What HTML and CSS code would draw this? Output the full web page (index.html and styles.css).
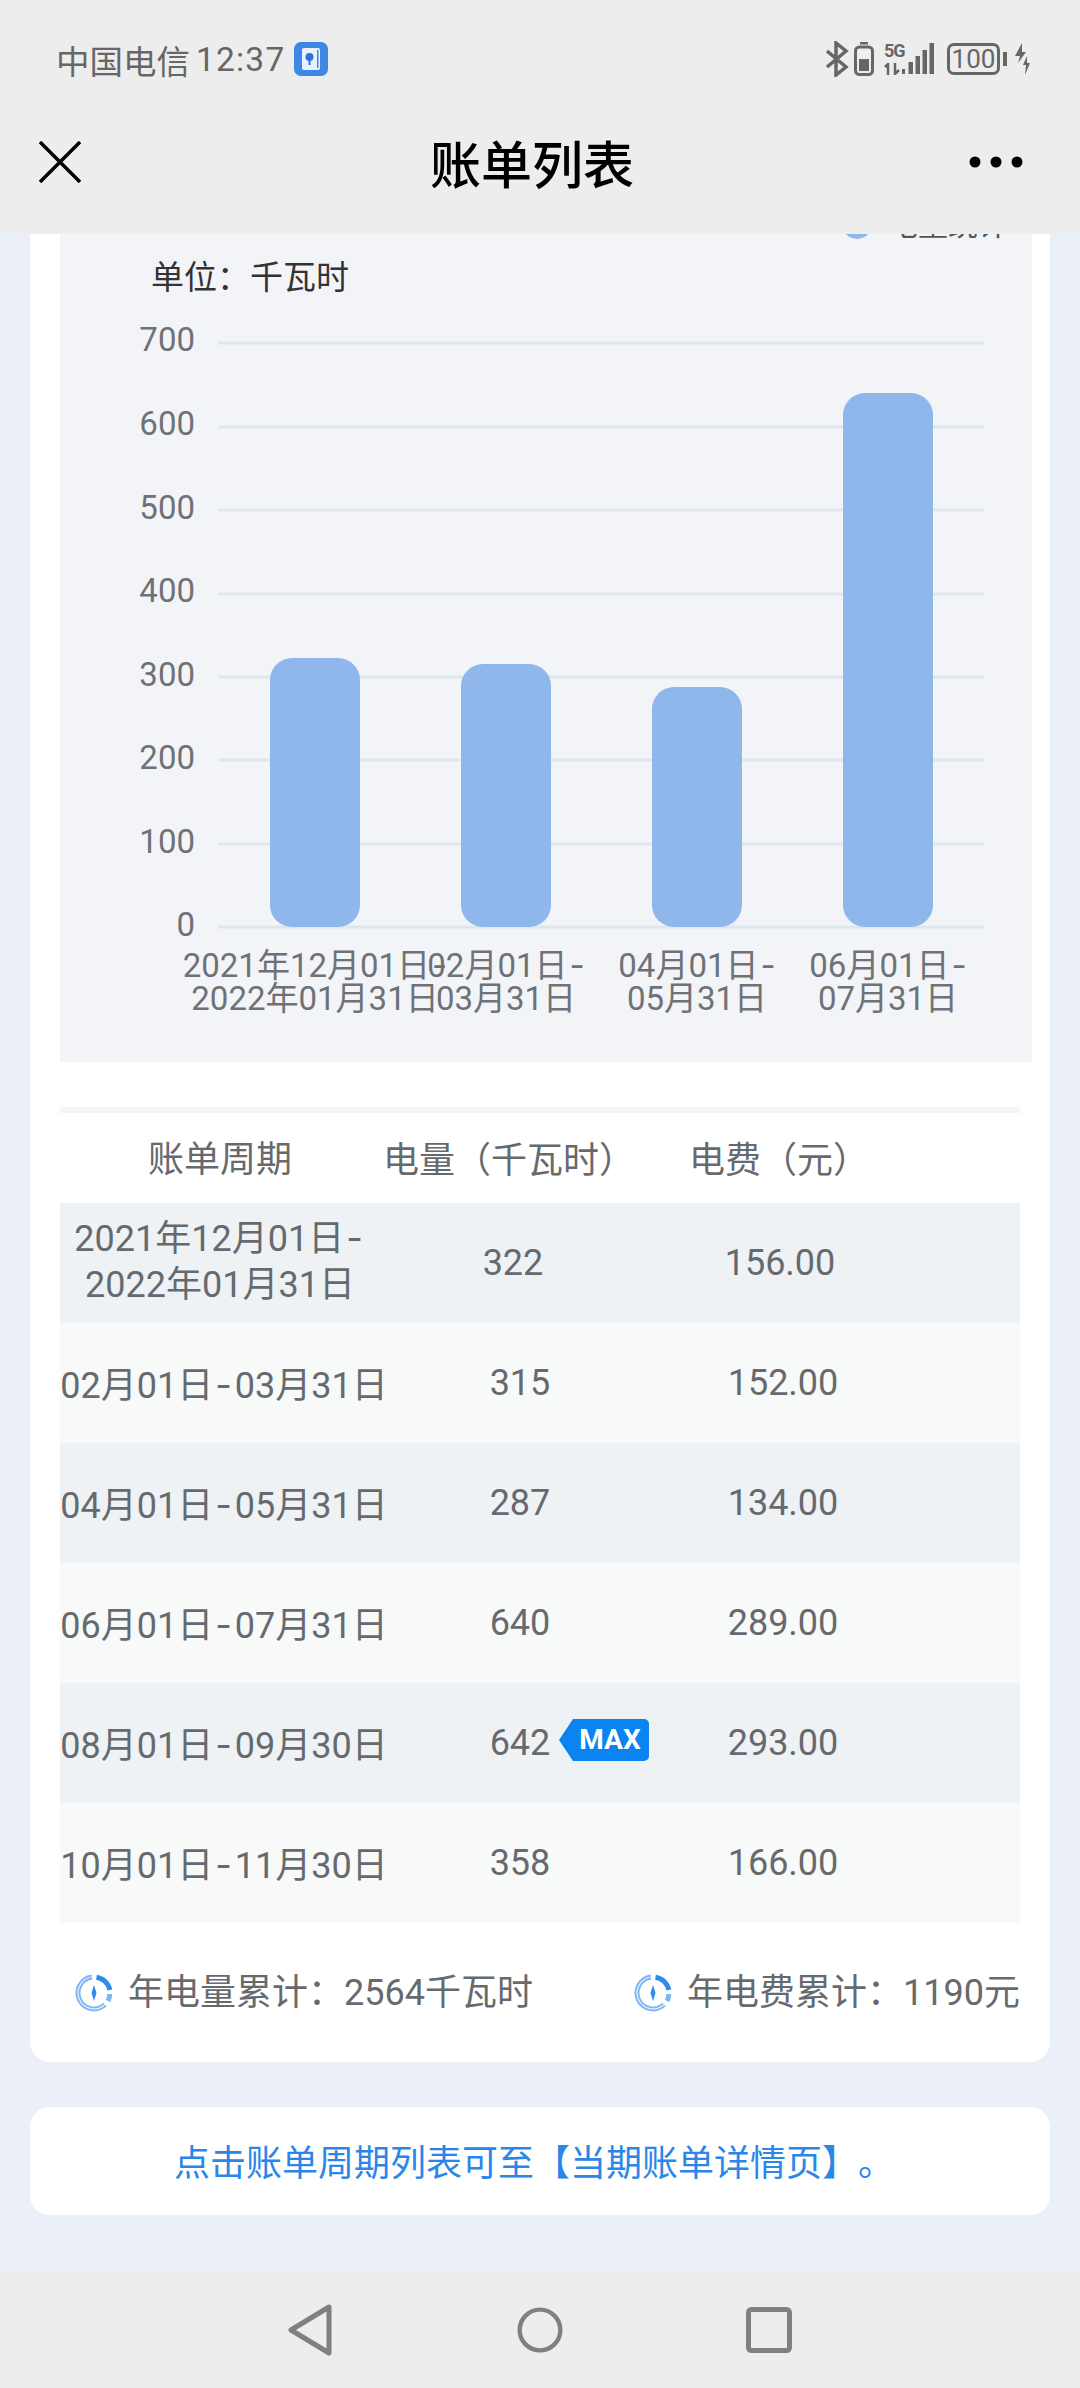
FILE: index.html
```html
<!DOCTYPE html>
<html lang="zh-CN">
<head>
    <meta charset="UTF-8">
    <meta name="viewport" content="width=device-width, initial-scale=1.0">
    <title>账单列表</title>
    <link rel="stylesheet" href="styles.css">
</head>
<body>
    <header class="topbar">
        <div class="status">
            <div class="status-left">
                <span class="carrier">中国电信</span>
                <span class="clock">12:37</span>
                <svg class="app-icon" viewBox="0 0 34 34">
                    <rect width="34" height="34" rx="7" fill="#3f87e4"/>
                    <rect x="8" y="6" width="18" height="22" rx="2" fill="#e8f1fc"/>
                    <rect x="23" y="8" width="1.5" height="18" fill="#3f87e4"/>
                    <circle cx="15.5" cy="15" r="4" fill="#2f74d0"/>
                    <rect x="14.5" y="18" width="2" height="5" fill="#2f74d0"/>
                </svg>
            </div>
            <div class="status-right">
                <svg class="ico-bt" viewBox="0 0 24 36">
                    <path d="M2 10 L21 26 L11 34 L11 2 L21 10 L2 26" fill="none" stroke="#666" stroke-width="3.5"/>
                </svg>
                <svg class="ico-phone" viewBox="0 0 20 34">
                    <rect x="6" y="0" width="8" height="2.5" fill="#666"/>
                    <rect x="1.5" y="5" width="17" height="27.5" rx="4" fill="none" stroke="#666" stroke-width="3"/>
                    <rect x="5" y="17" width="10" height="12" fill="#666"/>
                </svg>
                <div class="signal">
                    <div class="signal-type">
                        <span class="five-g">5G</span>
                        <svg class="ico-arrows" viewBox="0 0 18 12">
                            <path d="M4 12 V1 L1 4 M11 0 V11 L15 7" fill="none" stroke="#666" stroke-width="2.5"/>
                        </svg>
                    </div>
                    <svg class="ico-bars" viewBox="0 0 32 32">
                        <rect x="0" y="26" width="3" height="5" fill="#666"/>
                        <rect x="6.5" y="19" width="4.5" height="12" fill="#666"/>
                        <rect x="13.5" y="13" width="4.5" height="18" fill="#666"/>
                        <rect x="20.5" y="7" width="4.5" height="24" fill="#666"/>
                        <rect x="27.5" y="0" width="4.5" height="31" fill="#666"/>
                    </svg>
                </div>
                <div class="battery"><span>100</span></div>
                <span class="battery-cap"></span>
                <svg class="ico-bolt" viewBox="0 0 16 32">
                    <path d="M8 0 L1 13 H6 L4 20 L12 9 H8 Z M13 13 L9 22 H12 L11 32 L16 20 H13 Z" fill="#666"/>
                </svg>
            </div>
        </div>
        <div class="titlebar">
            <svg class="ico-close" viewBox="0 0 42 42">
                <path d="M1 1 L41 41 M41 1 L1 41" stroke="#000" stroke-width="3.5"/>
            </svg>
            <h1>账单列表</h1>
            <svg class="ico-more" viewBox="0 0 54 12">
                <circle cx="6" cy="6" r="5.5"/>
                <circle cx="27" cy="6" r="5.5"/>
                <circle cx="48" cy="6" r="5.5"/>
            </svg>
        </div>
    </header>

    <main class="content">
        <section class="card">
            <div class="chart-panel">
                <svg class="chart" viewBox="60 234 972 828">
                    <circle cx="857" cy="224" r="15" fill="#8fb7ec"/>
                    <text class="legend" x="888" y="235">电量统计</text>
                    <text class="unit" x="151" y="289">单位：千瓦时</text>

                    <g class="grid">
                        <line x1="218" x2="984" y1="343" y2="343"/>
                        <line x1="218" x2="984" y1="427" y2="427"/>
                        <line x1="218" x2="984" y1="510" y2="510"/>
                        <line x1="218" x2="984" y1="594" y2="594"/>
                        <line x1="218" x2="984" y1="677" y2="677"/>
                        <line x1="218" x2="984" y1="760" y2="760"/>
                        <line x1="218" x2="984" y1="844" y2="844"/>
                        <line x1="218" x2="984" y1="927" y2="927"/>
                    </g>

                    <g class="y-axis">
                        <text x="195" y="351">700</text>
                        <text x="195" y="435">600</text>
                        <text x="195" y="519">500</text>
                        <text x="195" y="602">400</text>
                        <text x="195" y="686">300</text>
                        <text x="195" y="769">200</text>
                        <text x="195" y="853">100</text>
                        <text x="195" y="936">0</text>
                    </g>

                    <g class="bars">
                        <rect x="270" y="658" width="90" height="269" rx="22"/>
                        <rect x="461" y="664" width="90" height="263" rx="22"/>
                        <rect x="652" y="687" width="90" height="240" rx="22"/>
                        <rect x="843" y="393" width="90" height="534" rx="22"/>
                    </g>

                    <g class="x-axis">
                        <text x="315" y="977">2021年12月01日<tspan class="dash" dx="2">-</tspan></text>
                        <text x="315" y="1010">2022年01月31日</text>
                        <text x="506" y="977">02月01日<tspan class="dash" dx="2">-</tspan></text>
                        <text x="506" y="1010">03月31日</text>
                        <text x="697" y="977">04月01日<tspan class="dash" dx="2">-</tspan></text>
                        <text x="697" y="1010">05月31日</text>
                        <text x="888" y="977">06月01日<tspan class="dash" dx="2">-</tspan></text>
                        <text x="888" y="1010">07月31日</text>
                    </g>
                </svg>
            </div>

            <div class="bill-table">
                <div class="row row-head">
                    <span>账单周期</span>
                    <span>电量（千瓦时）</span>
                    <span>电费（元）</span>
                </div>
                <div class="row row-first row-dark">
                    <span class="period-long">2021年12月01日<i class="dash">-</i><br>2022年01月31日</span>
                    <span>322</span>
                    <span>156.00</span>
                </div>
                <div class="row">
                    <span>02月01日<i class="dash">-</i>03月31日</span>
                    <span>315</span>
                    <span>152.00</span>
                </div>
                <div class="row row-dark">
                    <span>04月01日<i class="dash">-</i>05月31日</span>
                    <span>287</span>
                    <span>134.00</span>
                </div>
                <div class="row">
                    <span>06月01日<i class="dash">-</i>07月31日</span>
                    <span>640</span>
                    <span>289.00</span>
                </div>
                <div class="row row-dark">
                    <span>08月01日<i class="dash">-</i>09月30日</span>
                    <span class="has-badge">642<b class="max-badge">MAX</b></span>
                    <span>293.00</span>
                </div>
                <div class="row">
                    <span>10月01日<i class="dash">-</i>11月30日</span>
                    <span>358</span>
                    <span>166.00</span>
                </div>
            </div>

            <div class="totals">
                <div class="total">
                    <svg class="ico-total" viewBox="0 0 38 38">
                        <path d="M30 30.5 A16 16 0 1 1 17 3" fill="none" stroke="#7fb6f2" stroke-width="5"/>
                        <path d="M30 30.5 A16 16 0 1 1 17 3" fill="none" stroke="#e4f0fd" stroke-width="1.2"/>
                        <path d="M21.5 3.2 A16 16 0 0 1 34.8 16" fill="none" stroke="#2d8bee" stroke-width="5"/>
                        <path d="M34.8 20 A16 16 0 0 1 33 27" fill="none" stroke="#7fb6f2" stroke-width="5"/>
                        <path d="M19 11 L21.5 19 L19 27 L16.5 19 Z" fill="#2d8bee"/>
                    </svg>
                    <span>年电量累计：2564千瓦时</span>
                </div>
                <div class="total">
                    <svg class="ico-total" viewBox="0 0 38 38">
                        <path d="M30 30.5 A16 16 0 1 1 17 3" fill="none" stroke="#7fb6f2" stroke-width="5"/>
                        <path d="M30 30.5 A16 16 0 1 1 17 3" fill="none" stroke="#e4f0fd" stroke-width="1.2"/>
                        <path d="M21.5 3.2 A16 16 0 0 1 34.8 16" fill="none" stroke="#2d8bee" stroke-width="5"/>
                        <path d="M34.8 20 A16 16 0 0 1 33 27" fill="none" stroke="#7fb6f2" stroke-width="5"/>
                        <path d="M19 11 L21.5 19 L19 27 L16.5 19 Z" fill="#2d8bee"/>
                    </svg>
                    <span>年电费累计：1190元</span>
                </div>
            </div>
        </section>

        <section class="notice">点击账单周期列表可至【当期账单详情页】。</section>
    </main>

    <footer class="navbar">
        <svg class="ico-nav" viewBox="0 0 46 52">
            <path d="M41 3 L3 26 L41 49 Z" fill="none" stroke="#808080" stroke-width="5" stroke-linejoin="round"/>
        </svg>
        <svg class="ico-nav" viewBox="0 0 52 52">
            <circle cx="26" cy="26" r="23" fill="none" stroke="#808080" stroke-width="5"/>
        </svg>
        <svg class="ico-nav" viewBox="0 0 46 46">
            <rect x="2.5" y="2.5" width="41" height="41" rx="3" fill="none" stroke="#808080" stroke-width="5"/>
        </svg>
    </footer>
</body>
</html>
```

FILE: styles.css
```css
* {
    box-sizing: border-box;
}

body {
    margin: 0;
    width: 1080px;
    height: 2388px;
    display: flex;
    flex-direction: column;
    overflow: hidden;
    background-color: #ebeff7;
    font-family: Roboto, "Noto Sans CJK SC", sans-serif;
    color: #666a6e;
}

/* wider hyphen used in the date ranges */
.dash {
    font-family: Inter, sans-serif;
    font-style: normal;
}

i.dash {
    margin: 0 3px 0 2px;
}

/* top bars */
.topbar {
    height: 234px;
    flex: none;
    background-color: #ededed;
}

.status {
    height: 120px;
    padding: 41px 50px 0 56px;
    display: flex;
    justify-content: space-between;
    align-items: flex-start;
}

.status-left {
    display: flex;
    align-items: center;
    height: 36px;
    font-size: 33.5px;
    color: #666;
}

.clock {
    margin-left: 6px;
    letter-spacing: 1.2px;
}

.app-icon {
    width: 34px;
    height: 34px;
    margin-left: 9px;
}

.status-right {
    display: flex;
    align-items: center;
    height: 36px;
}

.ico-bt {
    width: 24px;
    height: 36px;
}

.ico-phone {
    width: 20px;
    height: 34px;
    margin-left: 5px;
}

.signal {
    display: flex;
    align-items: flex-end;
    margin-left: 10px;
}

.signal-type {
    width: 18px;
    display: flex;
    flex-direction: column;
    gap: 5px;
}

.five-g {
    font-size: 18px;
    line-height: 14px;
    font-weight: 700;
    color: #666;
    letter-spacing: -1px;
}

.ico-arrows {
    width: 18px;
    height: 12px;
}

.ico-bars {
    width: 32px;
    height: 32px;
}

.battery {
    width: 53px;
    height: 32px;
    margin-left: 13px;
    border: 3px solid #666;
    border-radius: 7px;
    display: flex;
    align-items: center;
    justify-content: center;
    font-size: 26px;
    color: #666;
}

.battery-cap {
    width: 4px;
    height: 14px;
    margin-left: 3px;
    background-color: #666;
}

.ico-bolt {
    width: 16px;
    height: 32px;
    margin-left: 7px;
}

.titlebar {
    height: 114px;
    padding: 0 57px 0 39px;
    display: flex;
    justify-content: space-between;
    align-items: center;
    margin-top: -15px;
}

.titlebar h1 {
    margin: 0 0 0 14px;
    font-size: 51px;
    font-weight: 500;
    color: #000;
}

.ico-close {
    width: 42px;
    height: 42px;
}

.ico-more {
    width: 54px;
    height: 12px;
}

/* page content */
.content {
    flex: 1;
    padding: 0 30px;
    overflow: hidden;
}

.card {
    background-color: #fff;
    border-radius: 0 0 20px 20px;
    padding: 0 0 0 30px;
}

.chart-panel {
    width: 972px;
    height: 828px;
    background-color: #f3f4f8;
}

.chart {
    display: block;
    width: 972px;
    height: 828px;
}

.chart text {
    font-size: 33px;
    fill: #6e7276;
}

.chart .unit {
    fill: #333;
    font-size: 33px;
}

.chart .legend {
    fill: #555;
    font-size: 30px;
}

.grid line {
    stroke: #dde8ee;
    stroke-width: 3;
}

.y-axis text {
    text-anchor: end;
}

.x-axis text {
    text-anchor: middle;
}

.bars rect {
    fill: #8fb7ec;
}

/* table */
.bill-table {
    width: 960px;
    margin-top: 45px;
    border-top: 6px solid #f5f5f5;
    font-size: 36px;
}

.row {
    height: 120px;
    display: grid;
    grid-template-columns: 328px 264px 262px;
    align-items: center;
    text-align: center;
    background-color: #f8f9f9;
}

.row span:first-child {
    white-space: nowrap;
    margin-bottom: 3px;
}

.row-dark {
    background-color: #eff2f5;
}

.row-head {
    height: 90px;
    padding-bottom: 2px;
    grid-template-columns: 320px 258px 282px;
    background-color: #fff;
}

.row-first {
    grid-template-columns: 320px 266px 268px;
}

.period-long {
    line-height: 46px;
}

.has-badge {
    position: relative;
}

.max-badge {
    position: absolute;
    left: 171px;
    top: -3px;
    width: 90px;
    height: 42px;
    padding-left: 12px;
    background-color: #0a84f0;
    border-radius: 0 5px 5px 0;
    clip-path: polygon(14px 0, 100% 0, 100% 100%, 14px 100%, 0 50%);
    font-size: 28px;
    line-height: 42px;
    font-weight: 700;
    color: #fff;
}

.totals {
    width: 960px;
    padding: 45px 0 44px 15px;
    display: flex;
    justify-content: space-between;
    font-size: 36px;
}

.total {
    display: flex;
    align-items: center;
    gap: 15px;
    line-height: 50px;
}

.ico-total {
    width: 38px;
    height: 38px;
}

.notice {
    height: 108px;
    margin-top: 45px;
    padding: 0 12px 2px 0;
    background-color: #fff;
    border-radius: 20px;
    display: flex;
    align-items: center;
    justify-content: center;
    font-size: 36px;
    color: #2a86e8;
    text-spacing-trim: space-all;
}

/* bottom nav */
.navbar {
    height: 116px;
    flex: none;
    background-color: #ededed;
    padding: 0 288px;
    display: flex;
    justify-content: space-between;
    align-items: center;
}

.ico-nav {
    height: 52px;
    width: 46px;
}
```
